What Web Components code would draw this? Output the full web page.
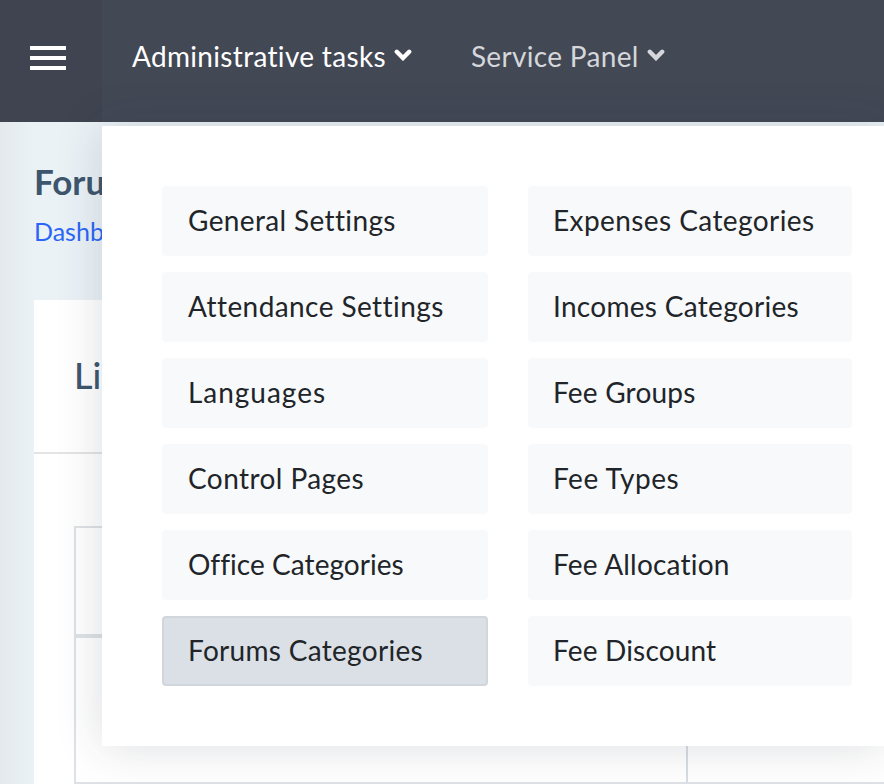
<!DOCTYPE html>
<html><head><meta charset="utf-8">
<style>
html,body{margin:0;padding:0;height:100%;overflow:hidden}
body{font-family:Lato,"Noto Sans",sans-serif;background:#e9f1f5}
</style></head><body>
<app-shell>
<top-bar slot="bar"></top-bar>
<page-body slot="body"></page-body>
<mega-menu slot="menu">
<menu-item style="--ls:.36px">General Settings</menu-item>
<menu-item style="--pl:23px">Expenses Categories</menu-item>
<menu-item>Attendance Settings</menu-item>
<menu-item style="--pl:23px;--ls:.3px">Incomes Categories</menu-item>
<menu-item style="--ls:.97px">Languages</menu-item>
<menu-item style="--pl:23px;--ls:.2px">Fee Groups</menu-item>
<menu-item>Control Pages</menu-item>
<menu-item style="--pl:23px;--ls:.5px">Fee Types</menu-item>
<menu-item style="--ls:.05px">Office Categories</menu-item>
<menu-item style="--pl:23px;--ls:.2px">Fee Allocation</menu-item>
<menu-item active style="--ls:.3px">Forums Categories</menu-item>
<menu-item style="--pl:23px;--ls:.17px">Fee Discount</menu-item>
</mega-menu>
</app-shell>
<script>
function def(name,html){customElements.define(name,class extends HTMLElement{
 constructor(){super();this.attachShadow({mode:'open'}).innerHTML=html;}
});}
def('app-shell',`<style>:host{display:block;position:relative;width:884px;height:784px;overflow:hidden}
.m{position:absolute;left:102px;top:126px;right:0;z-index:2}</style>
<slot name="bar"></slot><slot name="body"></slot><div class="m"><slot name="menu"></slot></div>`);
const chev=`<svg viewBox="0 0 18 12" width="18" height="12"><path d="M2.8 2.8 9 9l6.2-6.2" fill="none" stroke="currentColor" stroke-width="4.4" stroke-linecap="round" stroke-linejoin="miter"/></svg>`;
def('top-bar',`<style>:host{display:flex;height:122px;background:#434855;color:#fff;font-size:28px;letter-spacing:.32px}
.burger{width:102px;background:#3f4450;display:flex;align-items:center;justify-content:center;flex:none;box-sizing:border-box;padding:0 6px 6px 0}
.bars{display:flex;flex-direction:column;gap:6px;width:36px}
.bars i{display:block;height:4px;background:#fff}
nav{display:flex;gap:59px;padding-left:30px;align-items:center;padding-bottom:10px}
.l{display:flex;align-items:center;gap:8px}
.l svg{margin-top:-3px}
.dim{color:#d5d7da}
</style><div class="burger"><div class="bars"><i></i><i></i><i></i></div></div>
<nav><span class="l">Administrative tasks ${chev}</span><span class="l dim">Service Panel ${chev}</span></nav>`);
def('page-body',`<style>:host{display:block;height:662px;padding-left:34px;background:linear-gradient(90deg,#e4e9ed 0,#eaf2f6 34px);box-sizing:border-box}
.head{height:178px;padding-top:37px;box-sizing:border-box}
h1{margin:0;font-size:35px;line-height:44px;font-weight:700;color:#3e566d}
.crumb{font-size:25px;line-height:32px;margin-top:12px;color:#2b66f6}
.card{background:#fff;height:484px}
.title{height:154px;box-sizing:border-box;border-bottom:2px solid #e4e4e4;padding:50px 40px 0;font-size:36px;line-height:50px;font-weight:500;color:#3e566d}
.tbl{margin:72px 0 0 40px;height:258px;box-sizing:border-box;border:2px solid #dee2e6;border-right:0;display:grid;grid-template-columns:612px 1fr;grid-template-rows:110px 1fr}
.hd{grid-column:1/3;border-bottom:4px solid #dee2e6}
.c{border-right:2px solid #d7dde2}
</style><div class="head"><h1>Forums</h1><div class="crumb">Dashboard</div></div>
<div class="card"><div class="title">List</div><div class="tbl"><div class="hd"></div><div class="c"></div><div></div></div></div>`);
def('mega-menu',`<style>:host{display:grid;grid-template-columns:326px 324px;column-gap:40px;row-gap:16px;padding:60px 0 60px 60px;background:#fff;box-shadow:0 0 44px rgba(40,45,60,.16)}</style><slot></slot>`);
def('menu-item',`<style>:host{display:flex;align-items:center;height:70px;box-sizing:border-box;padding:0 24px 2px var(--pl,24px);background:#f8f9fa;border-radius:4px;font-size:28px;letter-spacing:var(--ls,.42px);color:#212529;border:2px solid transparent}
:host([active]){background:#dae0e5;border-color:#d0d6dc}</style><slot></slot>`);
</script>
</body></html>
